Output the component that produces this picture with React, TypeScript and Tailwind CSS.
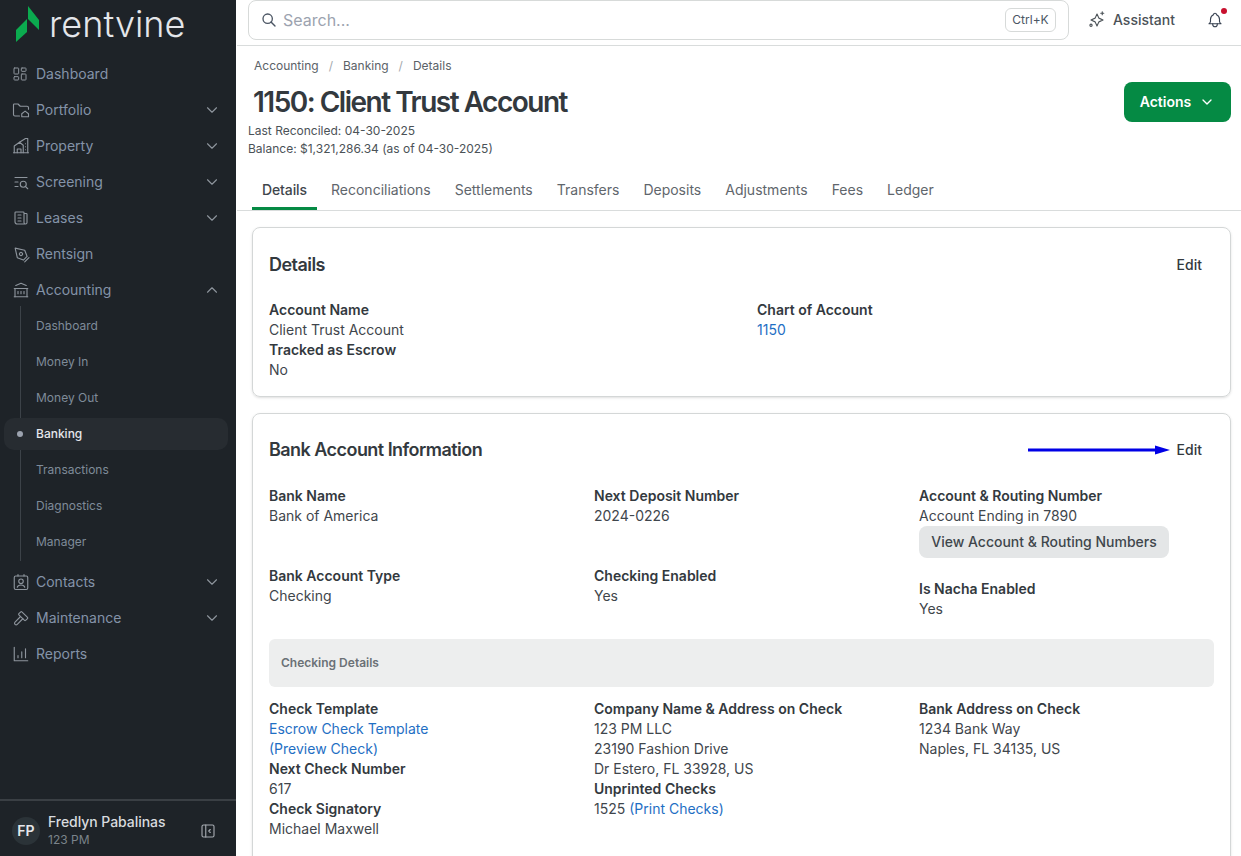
import { ReactNode } from "react";
import { LayoutDashboard } from "lucide-react";
import {
  TbBell,
  TbBuildingBank,
  TbChevronDown,
  TbChevronUp,
  TbHammer,
  TbLayoutSidebarLeftCollapse,
  TbListSearch,
  TbNews,
  TbSearch,
} from "react-icons/tb";

const Svg = ({ children, size = 18 }: { children: ReactNode; size?: number }) => (
  <svg
    width={size}
    height={size}
    viewBox="0 0 24 24"
    fill="none"
    stroke="currentColor"
    strokeWidth="1.5"
    strokeLinecap="round"
    strokeLinejoin="round"
  >
    {children}
  </svg>
);

const FolderHome = () => (
  <Svg>
    <path d="M10 20H4a2 2 0 0 1-2-2V5a1 1 0 0 1 1-1h5l3 3h9a2 2 0 0 1 2 2v2" />
    <path d="M13 17l4.500-3.500L22 17v4h-9z" />
  </Svg>
);

const PropertyIcon = () => (
  <Svg>
    <path d="M2 21h20" />
    <path d="M3 21v-9l7-5 5 4v10" />
    <path d="M10 7l8-5h3v19" />
    <path d="M7 21v-5h5v5" />
    <path d="M18 9v.01M18 13v.01M18 17v.01" />
  </Svg>
);

const PenIcon = () => (
  <Svg>
    <g transform="rotate(-45 12 12)">
      <path d="M8 23h8" />
      <path d="M8.500 20h7l3.500-8-7-11-7 11z" />
      <circle cx="12" cy="12" r="2" />
    </g>
  </Svg>
);

const BadgeIcon = () => (
  <Svg>
    <rect x="3" y="4" width="18" height="18" rx="2" />
    <path d="M8 2v2M16 2v2" />
    <circle cx="12" cy="11" r="3" />
    <path d="M7 19c.5-2 2-3 5-3s4.500 1 5 3" />
  </Svg>
);

const ReportsIcon = () => (
  <Svg>
    <path d="M3 3v18h18" />
    <path d="M8 14v3M13 9v8M18 5v12" />
  </Svg>
);

const SparkleIcon = () => (
  <Svg size={18}>
    <path d="M12 4l2.500 5.500L20 12l-5.500 2.500L12 20l-2.500-5.500L4 12l5.500-2.500z" />
    <path d="M19 1v4M17 3h4" />
    <circle cx="4" cy="19" r="1.500" />
  </Svg>
);

type NavItem = { label: string; icon: ReactNode; chevron?: "up" | "down" };

const NavRow = ({ label, icon, chevron }: NavItem) => (
  <div className="flex h-9 items-center pl-3 pr-[15px] text-sm text-[#8493a8]">
    <span className="flex w-[24px] shrink-0 items-center text-[#8e959d]">{icon}</span>
    <span className="flex-1">{label}</span>
    {chevron === "down" && <TbChevronDown size={18} strokeWidth={1.5} className="text-[#8e959d]" />}
    {chevron === "up" && <TbChevronUp size={18} strokeWidth={1.5} className="text-[#8e959d]" />}
  </div>
);

const SubRow = ({ label, active }: { label: string; active?: boolean }) =>
  active ? (
    <div className="relative mx-1 flex h-8 w-[224px] items-center rounded-[10px] bg-[#272c31] pl-8 text-xs font-medium text-[#e5e7eb]">
      <span className="absolute left-[13px] size-[6px] rounded-full bg-[#9ca3af]" />
      {label}
    </div>
  ) : (
    <div className="flex h-9 items-center pl-9 text-xs text-[#7f8b99]">{label}</div>
  );

const Sidebar = () => (
  <aside className="flex h-full w-[236px] shrink-0 flex-col bg-[#1e2328]">
    <div className="flex h-[56px] items-start pl-4 pt-[6px]">
      <svg width="25" height="36" viewBox="0 0 25 36">
        <path d="M12 0L23 14V24L12 13V0Z" fill="#0bab4f" />
        <path d="M0 24L11 13V26L0 36Z" fill="#0bab4f" />
      </svg>
      <span className="ml-[8px] mt-[-3px] text-[36px] font-light leading-[42px] text-[#e4e6ea]">rentvine</span>
    </div>
    <nav className="flex flex-1 flex-col">
      <NavRow label="Dashboard" icon={<LayoutDashboard size={16} strokeWidth={1.5} />} />
      <NavRow label="Portfolio" icon={<FolderHome />} chevron="down" />
      <NavRow label="Property" icon={<PropertyIcon />} chevron="down" />
      <NavRow label="Screening" icon={<TbListSearch size={18} strokeWidth={1.5} />} chevron="down" />
      <NavRow label="Leases" icon={<TbNews size={18} strokeWidth={1.5} />} chevron="down" />
      <NavRow label="Rentsign" icon={<PenIcon />} />
      <NavRow label="Accounting" icon={<TbBuildingBank size={18} strokeWidth={1.5} />} chevron="up" />
      <div className="relative flex flex-col pb-1">
        <span className="absolute left-[20px] top-[-2px] h-[255px] w-px bg-[#3c4248]" />
        <SubRow label="Dashboard" />
        <SubRow label="Money In" />
        <SubRow label="Money Out" />
        <div className="relative py-[2px]">
          <SubRow label="Banking" active />
        </div>
        <SubRow label="Transactions" />
        <SubRow label="Diagnostics" />
        <SubRow label="Manager" />
      </div>
      <NavRow label="Contacts" icon={<BadgeIcon />} chevron="down" />
      <NavRow label="Maintenance" icon={<TbHammer size={18} strokeWidth={1.5} />} chevron="down" />
      <NavRow label="Reports" icon={<ReportsIcon />} />
    </nav>
    <div className="flex h-[57px] items-center border-t-2 border-[#3a3f44] pl-3 pr-[19px] pt-1">
      <div className="flex size-7 items-center justify-center rounded-full bg-[#2b3338] text-sm font-semibold text-[#e5e7eb]">
        FP
      </div>
      <div className="ml-2 flex-1">
        <div className="text-sm font-medium leading-[18px] tracking-[-0.05px] text-[#d8dbdf]">Fredlyn Pabalinas</div>
        <div className="text-xs leading-[18px] text-[#7b838b]">123 PM</div>
      </div>
      <TbLayoutSidebarLeftCollapse size={18} strokeWidth={1.5} className="text-[#a6abb1]" />
    </div>
  </aside>
);

const TopBar = () => (
  <header className="flex h-[46px] shrink-0 items-start border-b border-[#d9dcdc] pl-[11px]">
    <div className="flex h-10 w-[821px] items-center rounded-lg border border-[#d7dad9] pl-[12px] pr-[12px]">
      <TbSearch size={16} className="text-[#4b5563]" />
      <span className="ml-[6px] flex-1 text-base text-[#9ca3af]">Search...</span>
      <span className="flex h-6 w-[51px] items-center justify-center rounded-md border border-[#d7dad9] text-xs text-[#4b5563]">
        Ctrl+K
      </span>
    </div>
    <div className="ml-[19px] flex h-10 items-center gap-[7px] text-sm font-medium text-[#4b5257]">
      <SparkleIcon />
      Assistant
    </div>
    <div className="relative ml-[31px] flex h-10 items-center text-[#374151]">
      <TbBell size={18} strokeWidth={1.5} />
      <span className="absolute right-[-3px] top-[8px] size-[6px] rounded-full bg-[#c8102e]" />
    </div>
  </header>
);

const Field = ({ label, value }: { label: string; value: ReactNode }) => (
  <div className="text-sm leading-5 text-[#3f464c]">
    <div className="font-semibold text-[#33393e]">{label}</div>
    <div>{value}</div>
  </div>
);

const Anchor = ({ children }: { children: ReactNode }) => <span className="text-[#1f6fc4]">{children}</span>;

const CardHeader = ({ title, arrow }: { title: string; arrow?: boolean }) => (
  <div className="relative flex items-center justify-between">
    <h2 className="text-lg font-semibold tracking-[-0.54px] text-[#33393e]">{title}</h2>
    {arrow && (
      <svg className="absolute right-[43px] top-1/2 -translate-y-1/2" width="143" height="10" viewBox="0 0 143 10">
        <path d="M0 5H130" stroke="#0000e6" strokeWidth="3" />
        <path d="M127 0.500L142 5L127 9.500Z" fill="#0000e6" />
      </svg>
    )}
    <span className="pr-3 text-sm font-medium text-[#33393e]">Edit</span>
  </div>
);

const tabs = ["Reconciliations", "Settlements", "Transfers", "Deposits", "Adjustments", "Fees", "Ledger"];

export default function App() {
  return (
    <div className="flex h-[856px] w-[1241px] overflow-hidden bg-white font-['Inter',sans-serif]">
      <Sidebar />
      <main className="flex min-w-0 flex-1 flex-col overflow-hidden pl-px">
        <TopBar />
        <div className="relative px-[11px] pt-[12px]">
          <div className="flex items-center pl-[6px] text-xs leading-4 text-[#5b6268]">
            <span>Accounting</span>
            <span className="mx-[10px] text-[#a3a8ad]">/</span>
            <span>Banking</span>
            <span className="mx-[10px] text-[#a3a8ad]">/</span>
            <span>Details</span>
          </div>
          <h1 className="mt-[10px] pl-[5px] text-[28px] font-semibold leading-[36px] tracking-[-1.5px] text-[#33393e]">
            1150: Client Trust Account
          </h1>
          <div className="mt-[2px] text-xs leading-[18px] text-[#4b5257]">
            <div>Last Reconciled: 04-30-2025</div>
            <div>Balance: $1,321,286.34 (as of 04-30-2025)</div>
          </div>
          <button className="absolute right-[10px] top-[36px] flex h-10 w-[107px] items-center justify-center gap-2 rounded-lg bg-[#058a44] text-sm font-semibold text-white">
            Actions
            <TbChevronDown size={16} />
          </button>
        </div>
        <div className="mt-[12px] flex h-[41px] shrink-0 gap-1 border-b border-[#d9dcdc] pl-[15px] text-sm">
          <div className="flex h-[40px] w-[65px] items-center justify-center border-b-[3px] border-[#058a44] pt-[3px] font-medium tracking-[-0.1px] text-[#3f464c]">
            Details
          </div>
          {tabs.map((t) => (
            <div key={t} className="flex h-[40px] items-center px-[10px] text-[#5f666c]">
              {t}
            </div>
          ))}
        </div>
        <div className="flex flex-col gap-4 pl-[15px] pr-[10px] pt-4">
          <section className="h-[170px] rounded-lg border border-[#d4d7d7] px-4 pt-[23px] shadow-sm">
            <CardHeader title="Details" />
            <div className="mt-[21px] grid grid-cols-[488px_1fr]">
              <div>
                <Field label="Account Name" value="Client Trust Account" />
                <Field label="Tracked as Escrow" value="No" />
              </div>
              <Field label="Chart of Account" value={<Anchor>1150</Anchor>} />
            </div>
          </section>
          <section className="h-[600px] rounded-lg border border-[#d4d7d7] px-4 pt-[22px] shadow-sm">
            <CardHeader title="Bank Account Information" arrow />
            <div className="mt-[22px] grid grid-cols-[325px_325px_1fr] gap-y-2">
              <Field label="Bank Name" value="Bank of America" />
              <Field label="Next Deposit Number" value="2024-0226" />
              <div>
                <Field label="Account & Routing Number" value="Account Ending in 7890" />
                <button className="flex h-8 w-[250px] items-center justify-center rounded-lg bg-[#e4e6e7] text-sm font-medium text-[#3f464c]">
                  View Account & Routing Numbers
                </button>
              </div>
              <Field label="Bank Account Type" value="Checking" />
              <Field label="Checking Enabled" value="Yes" />
              <div className="pt-[13px]">
                <Field label="Is Nacha Enabled" value="Yes" />
              </div>
            </div>
            <div className="mt-5 flex h-12 items-center rounded-md bg-[#edeeee] px-3 text-xs font-semibold text-[#6b7176]">
              Checking Details
            </div>
            <div className="mt-3 grid grid-cols-[325px_325px_1fr]">
              <div>
                <Field
                  label="Check Template"
                  value={
                    <>
                      <Anchor>Escrow Check Template</Anchor>
                      <br />
                      <Anchor>(Preview Check)</Anchor>
                    </>
                  }
                />
                <Field label="Next Check Number" value="617" />
                <Field label="Check Signatory" value="Michael Maxwell" />
              </div>
              <div>
                <Field
                  label="Company Name & Address on Check"
                  value={
                    <>
                      123 PM LLC
                      <br />
                      23190 Fashion Drive
                      <br />
                      Dr Estero, FL 33928, US
                    </>
                  }
                />
                <Field
                  label="Unprinted Checks"
                  value={
                    <>
                      1525 <Anchor>(Print Checks)</Anchor>
                    </>
                  }
                />
              </div>
              <Field
                label="Bank Address on Check"
                value={
                  <>
                    1234 Bank Way
                    <br />
                    Naples, FL 34135, US
                  </>
                }
              />
            </div>
          </section>
        </div>
      </main>
    </div>
  );
}
